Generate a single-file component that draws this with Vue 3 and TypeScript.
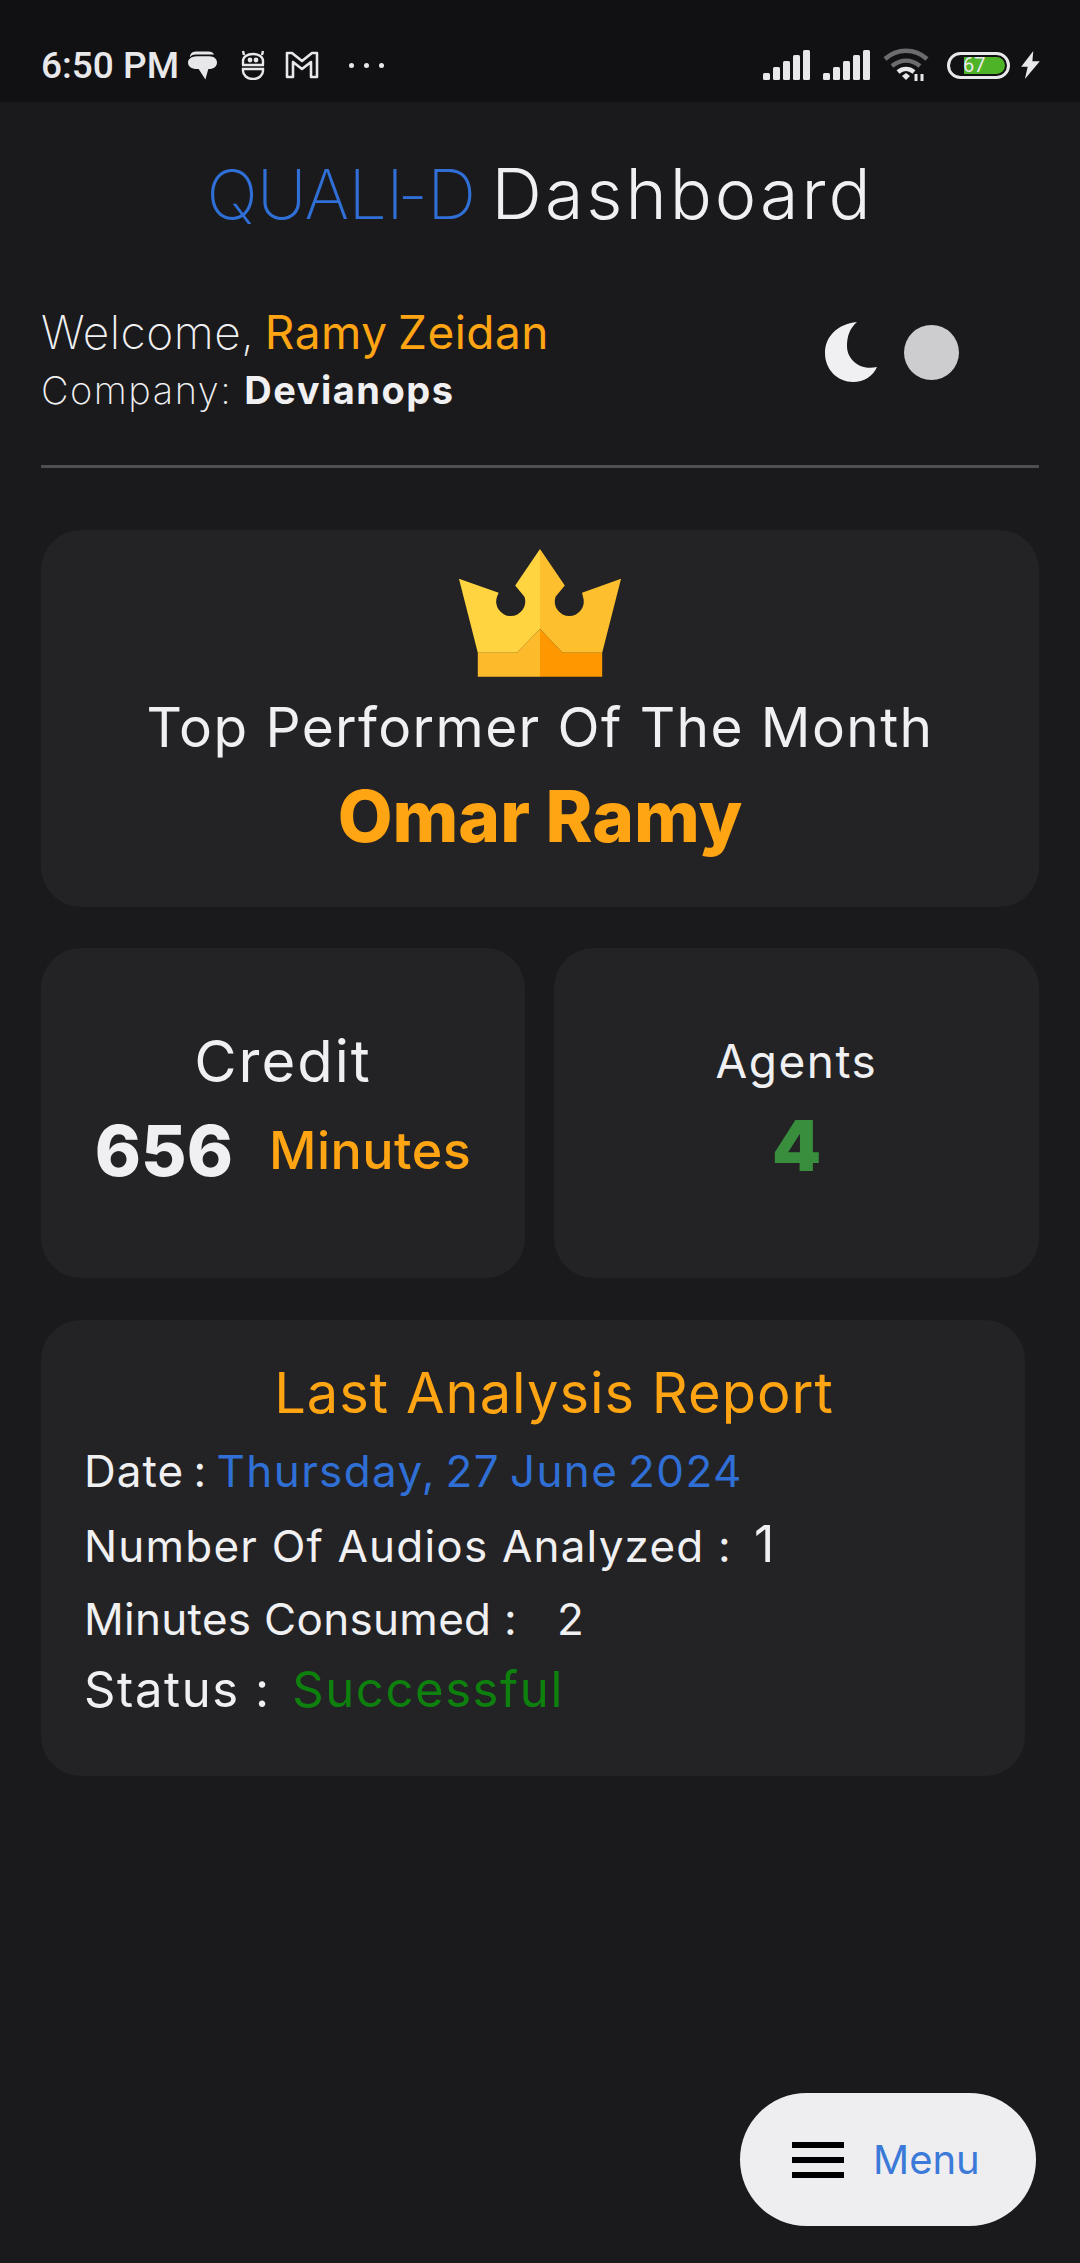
<script setup lang="ts">
const reportRows = [
  { label: 'Number Of Audios Analyzed :', value: '1', kind: 'audios' },
  { label: 'Minutes Consumed :', value: '2', kind: 'minutes' },
]
const signalBars = [
  { x: 0, y: 23, h: 7 },
  { x: 10, y: 17, h: 13 },
  { x: 20, y: 11, h: 19 },
  { x: 30, y: 5, h: 25 },
  { x: 40, y: 0, h: 30 },
]
</script>

<template>
  <div class="page">
    <header class="status-bar">
      <div class="status-left">
        <span class="clock">6:50 PM</span>
        <svg class="ic-chat" viewBox="0 0 30 29">
          <path d="M8 0h13c3 0 5 1 6 3H8C5 3 3 4 2 6c0-3 2-6 6-6z" fill="#e8e8ea" />
          <path d="M9 5h13c5 0 8 3 8 6.500S27 18 23 18l-2 0-3 11-7-11H8c-5 0-8-3-8-6.500S4 5 9 5z" fill="#e8e8ea" />
        </svg>
        <svg class="ic-bot" viewBox="0 0 24 30" fill="none" stroke="#e8e8ea" stroke-width="2.400">
          <path d="M2 15v-4c0-4 4-7 10-7s10 3 10 7v4M1 15h22M2 19h20v2c0 4-4 8-10 8S2 25 2 21z" />
          <path d="M3 5L2 1M21 5l1-4" />
          <circle cx="9" cy="10" r="1.200" fill="#e8e8ea" />
          <circle cx="15" cy="10" r="1.200" fill="#e8e8ea" />
        </svg>
        <svg class="ic-mail" viewBox="0 0 34 28" fill="none" stroke="#e8e8ea" stroke-width="2.600" stroke-linejoin="round">
          <path d="M2 2h5l10 8 10-8h5v24h-6V11l-9 7-9-7v15H2z" />
        </svg>
        <span class="dots"><i></i><i></i><i></i></span>
      </div>
      <div class="status-right">
        <svg v-for="n in 2" :key="n" class="ic-signal" viewBox="0 0 47 30">
          <rect v-for="b in signalBars" :key="b.x" :x="b.x" :y="b.y" width="7" :height="b.h" rx="1.500" fill="#e8e8ea" />
        </svg>
        <svg class="ic-wifi" viewBox="0 0 46 34" fill="none">
          <path d="M2 11C14 0 32 0 44 11" stroke="#6c6c6e" stroke-width="4.500" />
          <path d="M9 18c9-7 19-7 28 0" stroke="#6c6c6e" stroke-width="4.500" />
          <path d="M15 24c5-4 11-4 16 0" stroke="#e8e8ea" stroke-width="4.500" />
          <path d="M19 28l4-3 4 3-4 4z" fill="#e8e8ea" />
          <path d="M33 26v7M39 26v7" stroke="#e8e8ea" stroke-width="3" />
        </svg>
        <div class="battery">
          <span class="battery-fill"></span>
          <span class="battery-num">67</span>
        </div>
        <svg class="ic-bolt" viewBox="0 0 20 30">
          <path d="M13 0L0 17h7l-3 13L20 11h-8z" fill="#e8e8ea" />
        </svg>
      </div>
    </header>

    <main class="content">
      <h1 class="title"><span class="brand">QUAL<span class="tight">I</span>-D</span> <span class="dash">Dashboard</span></h1>

      <section class="welcome">
        <div>
          <p class="hello">Welcome, <span class="orange">Ramy Zeidan</span></p>
          <p class="company">Company: <strong>Devianops</strong></p>
        </div>
        <div class="theme-toggle">
          <svg class="moon" viewBox="0 0 52 60">
            <path d="M32 0C12 2 0 15 0 31c0 17 13 29 28 29 11 0 20-6 24-15-18 4-30-8-30-21C22 14 25 6 32 0z" fill="#f0f0f2" />
          </svg>
          <span class="sun"></span>
        </div>
      </section>

      <hr class="divider" />

      <section class="card top-card">
        <svg class="crown" viewBox="170 85 500 393">
          <path d="M420 88L345 198L373 232A44 44 0 1 1 290 232L295 220L175 178L232 402H350L420 330Z" fill="#ffd440" />
          <path d="M232 402H350L420 330V474H232Z" fill="#fdbb2c" />
          <path d="M420 88L495 198L467 232A44 44 0 1 0 550 232L547 220L665 178L608 402H488L420 330Z" fill="#fdbf2e" />
          <path d="M608 402H488L420 330V474H608Z" fill="#ff9800" />
        </svg>
        <p class="top-label">Top Performer Of The Month</p>
        <p class="top-name">Omar Ramy</p>
      </section>

      <section class="stats">
        <div class="card stat">
          <p class="credit-label">Credit</p>
          <p class="credit-line"><b>656</b><span>Minutes</span></p>
        </div>
        <div class="card stat">
          <p class="agents-label">Agents</p>
          <p class="agents-value">4</p>
        </div>
      </section>

      <section class="card report">
        <h2 class="report-title">Last Analysis Report</h2>
        <p class="row date">Date : <span class="blue">Thursday, 27 June 2024</span></p>
        <p v-for="r in reportRows" :key="r.label" class="row" :class="r.kind">
          {{ r.label }}<span class="row-value">{{ r.value }}</span>
        </p>
        <p class="row status">Status : <span class="green">Successful</span></p>
      </section>
    </main>

    <button class="menu-btn">
      <span class="burger"><i></i><i></i><i></i></span>
      <span class="menu-text">Menu</span>
    </button>
  </div>
</template>

<style scoped>
.page {
  position: relative;
  width: 1080px;
  height: 2263px;
  overflow: hidden;
  background: #1a1a1c;
  color: #f0f0f2;
  font-family: Inter, 'Noto Sans', sans-serif;
}
p,
h1,
h2 {
  margin: 0;
  font-weight: 400;
}

.status-bar {
  height: 102px;
  background: #111113;
  display: flex;
  justify-content: space-between;
  align-items: center;
  padding: 28px 40px 0 41px;
  box-sizing: border-box;
}
.status-left,
.status-right {
  display: flex;
  align-items: center;
}
.clock {
  font-family: Roboto, sans-serif;
  font-weight: 500;
  font-size: 37px;
  color: #e8e8ea;
}
.ic-chat {
  width: 29px;
  height: 29px;
  margin-left: 9px;
}
.ic-bot {
  width: 24px;
  height: 30px;
  margin-left: 24px;
}
.ic-mail {
  width: 34px;
  height: 28px;
  margin-left: 20px;
}
.dots {
  display: flex;
  gap: 10px;
  margin-left: 30px;
}
.dots i {
  width: 5px;
  height: 5px;
  border-radius: 50%;
  background: #e8e8ea;
}
.ic-signal {
  width: 47px;
  height: 30px;
  margin-right: 13px;
}
.ic-wifi {
  width: 46px;
  height: 34px;
  margin-left: 0;
}
.battery {
  position: relative;
  width: 63px;
  height: 27px;
  margin-left: 18px;
  border: 3px solid #e8e8ea;
  border-radius: 14px;
  box-sizing: border-box;
  background: #111113;
}
.battery-fill {
  position: absolute;
  top: 2px;
  bottom: 2px;
  left: 14px;
  right: 2px;
  background: #4fb328;
  border-radius: 0 10px 10px 0;
}
.battery-num {
  position: absolute;
  left: 13px;
  top: -2px;
  font-size: 20px;
  line-height: 25px;
  color: #e8e8ea;
  font-family: Roboto, sans-serif;
}
.ic-bolt {
  width: 19px;
  height: 28px;
  margin-left: 11px;
}

.content {
  padding: 0 41px;
}
.title {
  margin-top: 52px;
  text-align: center;
  font-size: 68px;
  line-height: 80px;
  font-weight: 300;
  word-spacing: -3px;
  color: #f0f0f2;
}
.brand {
  color: #2f6fd6;
  font-weight: 200;
  letter-spacing: -0.600px;
}
.dash {
  font-size: 70px;
  letter-spacing: 3px;
}
.tight {
  letter-spacing: -6px;
}
.welcome {
  margin-top: 68px;
  display: flex;
  justify-content: space-between;
  align-items: center;
}
.hello {
  font-size: 46px;
  line-height: 60px;
  font-weight: 200;
  letter-spacing: 0.500px;
  word-spacing: -3px;
}
.company {
  font-size: 38px;
  line-height: 57px;
  font-weight: 200;
  letter-spacing: 1.500px;
}
.company strong {
  font-weight: 700;
}
.orange {
  color: #ffa412;
  font-weight: 400;
}
.theme-toggle {
  display: flex;
  align-items: center;
  gap: 27px;
  margin: 0 80px 17px 0;
}
.moon {
  width: 52px;
  height: 60px;
}
.sun {
  width: 55px;
  height: 55px;
  border-radius: 50%;
  background: #cdcdcf;
}
.divider {
  margin: 46px 0 0;
  border: 0;
  height: 3px;
  background: #4f4f52;
}

.card {
  background: #232325;
  border-radius: 40px;
  box-sizing: border-box;
}
.top-card {
  margin-top: 62px;
  height: 377px;
  padding-top: 18px;
  text-align: center;
}
.crown {
  display: block;
  width: 166px;
  height: 130px;
  margin: 0 auto;
}
.top-label {
  margin-top: 14px;
  font-size: 55px;
  line-height: 70px;
  letter-spacing: 1.400px;
}
.top-name {
  margin-top: 12px;
  font-size: 71px;
  line-height: 84px;
  font-weight: 800;
  color: #ffa412;
}
.stats {
  margin-top: 41px;
  display: grid;
  grid-template-columns: 484px 485px;
  gap: 29px;
}
.stat {
  height: 330px;
  text-align: center;
  padding-top: 78px;
}
.credit-label {
  font-size: 58px;
  line-height: 70px;
  letter-spacing: 2px;
}
.credit-line {
  margin-top: 13px;
  display: flex;
  justify-content: center;
  align-items: center;
  gap: 36px;
  line-height: 84px;
}
.credit-line b {
  font-size: 70px;
  font-weight: 800;
}
.credit-line span {
  font-size: 52px;
  font-weight: 500;
  letter-spacing: 0.500px;
  color: #ffa412;
}
.agents-label {
  font-size: 46px;
  line-height: 70px;
  letter-spacing: 1.500px;
}
.agents-value {
  margin-top: 8px;
  font-size: 70px;
  line-height: 84px;
  font-weight: 900;
  color: #388e3c;
}
.report {
  margin-top: 42px;
  width: 984px;
  height: 456px;
  padding: 36px 43px 0;
}
.report-title {
  font-size: 56px;
  line-height: 74px;
  letter-spacing: 1px;
  text-align: center;
  color: #ffa412;
  padding-left: 42px;
}
.row {
  font-size: 44px;
  line-height: 73px;
  letter-spacing: 1px;
}
.date {
  margin-top: 5px;
  word-spacing: -4px;
}
.audios {
  letter-spacing: 1.200px;
}
.audios .row-value {
  margin-left: 22px;
  font-size: 50px;
}
.minutes {
  letter-spacing: 0.300px;
}
.minutes .row-value {
  margin-left: 40px;
}
.status {
  font-size: 49px;
  line-height: 68px;
  letter-spacing: 1.600px;
}
.blue {
  color: #2f6fd6;
  letter-spacing: 1.400px;
}
.green {
  color: #0e800e;
  margin-left: 6px;
}

.menu-btn {
  position: absolute;
  left: 740px;
  top: 2093px;
  width: 296px;
  height: 133px;
  border: 0;
  border-radius: 67px;
  background: #eeeef0;
  display: flex;
  align-items: center;
  padding: 0 0 0 52px;
  box-sizing: border-box;
}
.burger {
  display: flex;
  flex-direction: column;
  gap: 9px;
  width: 52px;
}
.burger i {
  height: 6px;
  background: #000;
}
.menu-text {
  margin-left: 29px;
  font-family: Inter, sans-serif;
  font-size: 40px;
  color: #3b7ad9;
}
</style>

<style>
html,
body {
  margin: 0;
  background: #1a1a1c;
}
</style>
